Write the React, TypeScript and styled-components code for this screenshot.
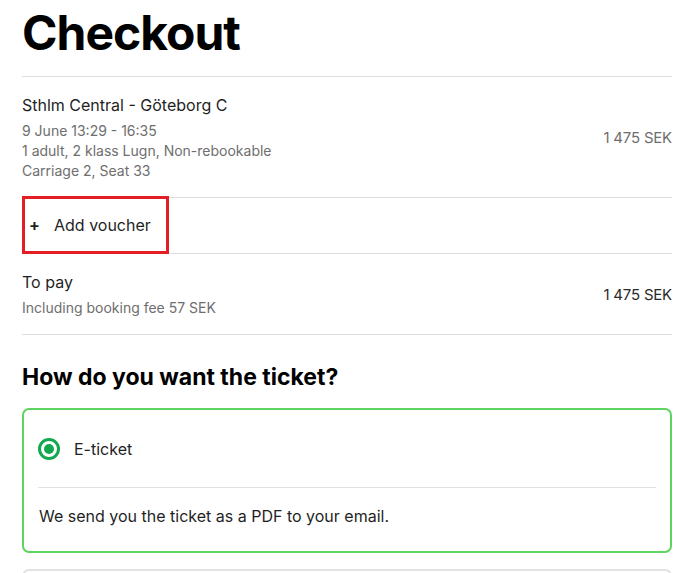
import React from "react";
import styled, { createGlobalStyle } from "styled-components";

const Global = createGlobalStyle`
  html, body { margin: 0; padding: 0; background: #fff; }
  body { font-family: "Inter", "Lato", sans-serif; color: #1a1a1a; }
  * { box-sizing: border-box; }
`;

const Page = styled.div`
  width: 650px;
  margin-left: 22px;
  display: flex;
  flex-direction: column;
`;

const Title = styled.h1`
  margin: 0;
  font-family: "Inter", sans-serif;
  font-weight: 700;
  font-size: 48px;
  line-height: 66px;
  letter-spacing: -1px;
  color: #000;
  padding: 0 0 10px;
  border-bottom: 1px solid #dedede;
`;

const Row = styled.div`
  display: flex;
  align-items: center;
  justify-content: space-between;
  border-bottom: 1px solid #dedede;
  padding: 17px 0 16px;
`;

const Col = styled.div`
  display: flex;
  flex-direction: column;
`;

const Main = styled.div`
  font-size: 16px;
  line-height: 22px;
  color: #1f1f1f;
  margin-bottom: 5px;
`;

const Sub = styled.div`
  font-size: 14px;
  line-height: 20px;
  color: #6e6e6e;
`;

const Price = styled.div<{ $dark?: boolean }>`
  font-size: 15px;
  color: ${(p) => (p.$dark ? "#2a2a2a" : "#6e6e6e")};
  letter-spacing: -0.2px;
`;

const VoucherRow = styled.div`
  display: flex;
  border-bottom: 1px solid #dedede;
  margin-top: -2px;
`;

const VoucherBtn = styled.button`
  display: flex;
  align-items: center;
  gap: 15px;
  height: 58px;
  width: 147px;
  margin: 0 0 -1px;
  padding: 0 0 0 4px;
  border: 3px solid #e31e24;
  background: #fff;
  font-family: inherit;
  font-size: 16px;
  color: #1f1f1f;
  cursor: pointer;
`;

const Plus = styled.span`
  font-weight: 700;
  font-size: 16px;
  width: 10px;
  text-align: center;
`;

const Heading = styled.h2`
  margin: 0;
  padding: 27px 0 16px;
  font-family: "Inter", sans-serif;
  font-weight: 700;
  font-size: 23px;
  line-height: 30px;
  color: #000;
`;

const Card = styled.div<{ $active?: boolean }>`
  border: 2px solid ${(p) => (p.$active ? "#5fd35f" : "#e2e2e2")};
  border-radius: 7px;
  padding: 0 14px;
  margin-bottom: 16px;
  display: flex;
  flex-direction: column;
`;

const Option = styled.label`
  display: flex;
  align-items: center;
  gap: 14px;
  height: 78px;
  font-size: 16px;
  color: #1f1f1f;
  border-bottom: 1px solid #e0e0e0;
`;

const Radio = styled.span`
  width: 22px;
  height: 22px;
  border-radius: 50%;
  border: 3px solid #11a84e;
  display: flex;
  align-items: center;
  justify-content: center;
  &::after {
    content: "";
    width: 10px;
    height: 10px;
    border-radius: 50%;
    background: #11a84e;
  }
`;

const CardText = styled.div`
  font-size: 16px;
  line-height: 22px;
  padding: 17px 1px 24px;
  color: #1f1f1f;
`;

const EmptyCard = styled(Card)`
  height: 60px;
`;

export default function App() {
  return (
    <>
      <Global />
      <Page>
        <Title>Checkout</Title>
        <Row>
          <Col>
            <Main>Sthlm Central - Göteborg C</Main>
            <Sub>9 June 13:29 - 16:35</Sub>
            <Sub>1 adult, 2 klass Lugn, Non-rebookable</Sub>
            <Sub>Carriage 2, Seat 33</Sub>
          </Col>
          <Price>1 475 SEK</Price>
        </Row>
        <VoucherRow>
          <VoucherBtn>
            <Plus>+</Plus>
            Add voucher
          </VoucherBtn>
        </VoucherRow>
        <Row>
          <Col>
            <Main>To pay</Main>
            <Sub>Including booking fee 57 SEK</Sub>
          </Col>
          <Price $dark>1 475 SEK</Price>
        </Row>
        <Heading>How do you want the ticket?</Heading>
        <Card $active>
          <Option>
            <Radio />
            E-ticket
          </Option>
          <CardText>We send you the ticket as a PDF to your email.</CardText>
        </Card>
        <EmptyCard />
      </Page>
    </>
  );
}
